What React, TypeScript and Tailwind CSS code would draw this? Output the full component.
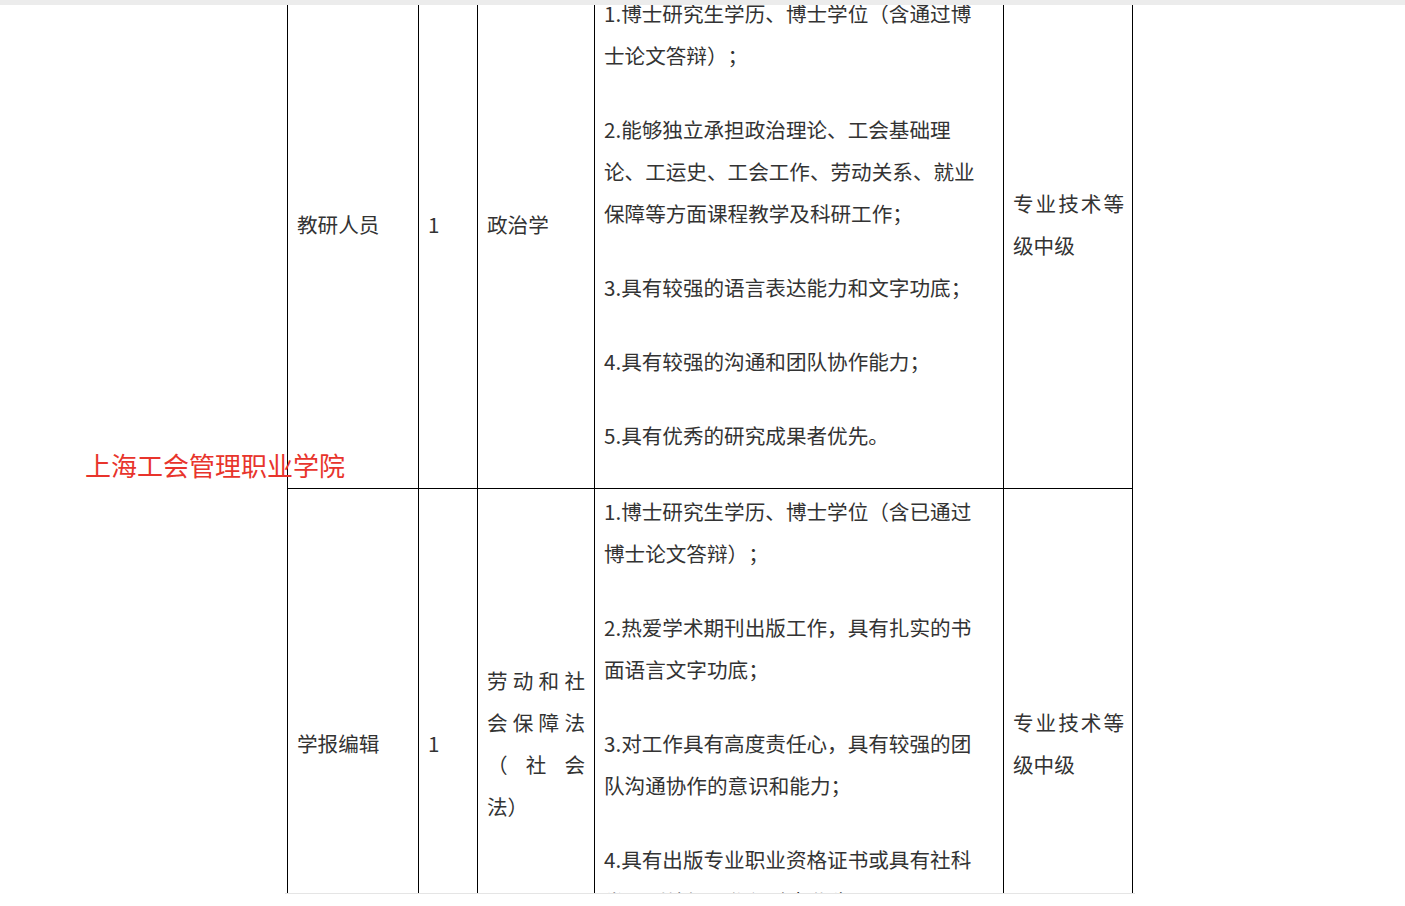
import React from "react";

type CellProps = { className: string; children: React.ReactNode };

function Cell({ className, children }: CellProps) {
  return (
    <div className={"flex shrink-0 flex-col justify-center border-l border-black pt-[1px] " + className}>
      {children}
    </div>
  );
}

function P({ children }: { children: React.ReactNode }) {
  return <p className="mb-[32px]">{children}</p>;
}

type RowData = {
  name: string;
  count: string;
  major: string;
  reqs: string[];
  level: string;
};

const rows: RowData[] = [
  {
    name: "教研人员",
    count: "1",
    major: "政治学",
    reqs: [
      "1.博士研究生学历、博士学位（含通过博士论文答辩）；",
      "2.能够独立承担政治理论、工会基础理论、工运史、工会工作、劳动关系、就业保障等方面课程教学及科研工作；",
      "3.具有较强的语言表达能力和文字功底；",
      "4.具有较强的沟通和团队协作能力；",
      "5.具有优秀的研究成果者优先。",
    ],
    level: "专业技术等级中级",
  },
  {
    name: "学报编辑",
    count: "1",
    major: "劳动和社会保障法（社会法）",
    reqs: [
      "1.博士研究生学历、博士学位（含已通过博士论文答辩）；",
      "2.热爱学术期刊出版工作，具有扎实的书面语言文字功底；",
      "3.对工作具有高度责任心，具有较强的团队沟通协作的意识和能力；",
      "4.具有出版专业职业资格证书或具有社科类期刊编辑工作经验者优先。",
      "5.具有相关工作经历者优先。",
    ],
    level: "专业技术等级中级",
  },
];

export default function App() {
  return (
    <div className="relative h-[906px] w-full overflow-hidden bg-white font-['Noto_Sans_CJK_SC','Noto_Sans',sans-serif]">
      <div className="h-[5px] bg-[#ececec]" />
      <div className="ml-[285px] h-[889px] w-[850px] overflow-hidden border-b border-[#e5e5e5]">
        <div className="ml-[2px] mt-[-15px] w-[846px] text-[20.6px] leading-[42px] text-[#333] [text-spacing-trim:space-all]">
          {rows.map((r, i) => (
            <div key={i} className="flex border-t border-black">
              <Cell className="w-[131px] pl-[9px] pr-[8px] text-justify">
                <P>{r.name}</P>
              </Cell>
              <Cell className="w-[59px] pl-[9px] pr-[8px] text-justify">
                <P>{r.count}</P>
              </Cell>
              <Cell className="w-[117px] pl-[9px] pr-[9px] text-justify">
                <P>{r.major}</P>
              </Cell>
              <Cell className="w-[409px] pl-[9px] pr-[27px] text-left">
                {r.reqs.map((t, j) => (
                  <P key={j}>{t}</P>
                ))}
              </Cell>
              <Cell className="w-[130px] border-r pl-[9px] pr-[8px] text-justify">
                <P>{r.level}</P>
              </Cell>
            </div>
          ))}
        </div>
      </div>
      <div className="absolute left-[85px] top-[452px] whitespace-nowrap text-[26px] leading-[26px] text-[#e8342c]">
        上海工会管理职业学院
      </div>
    </div>
  );
}
